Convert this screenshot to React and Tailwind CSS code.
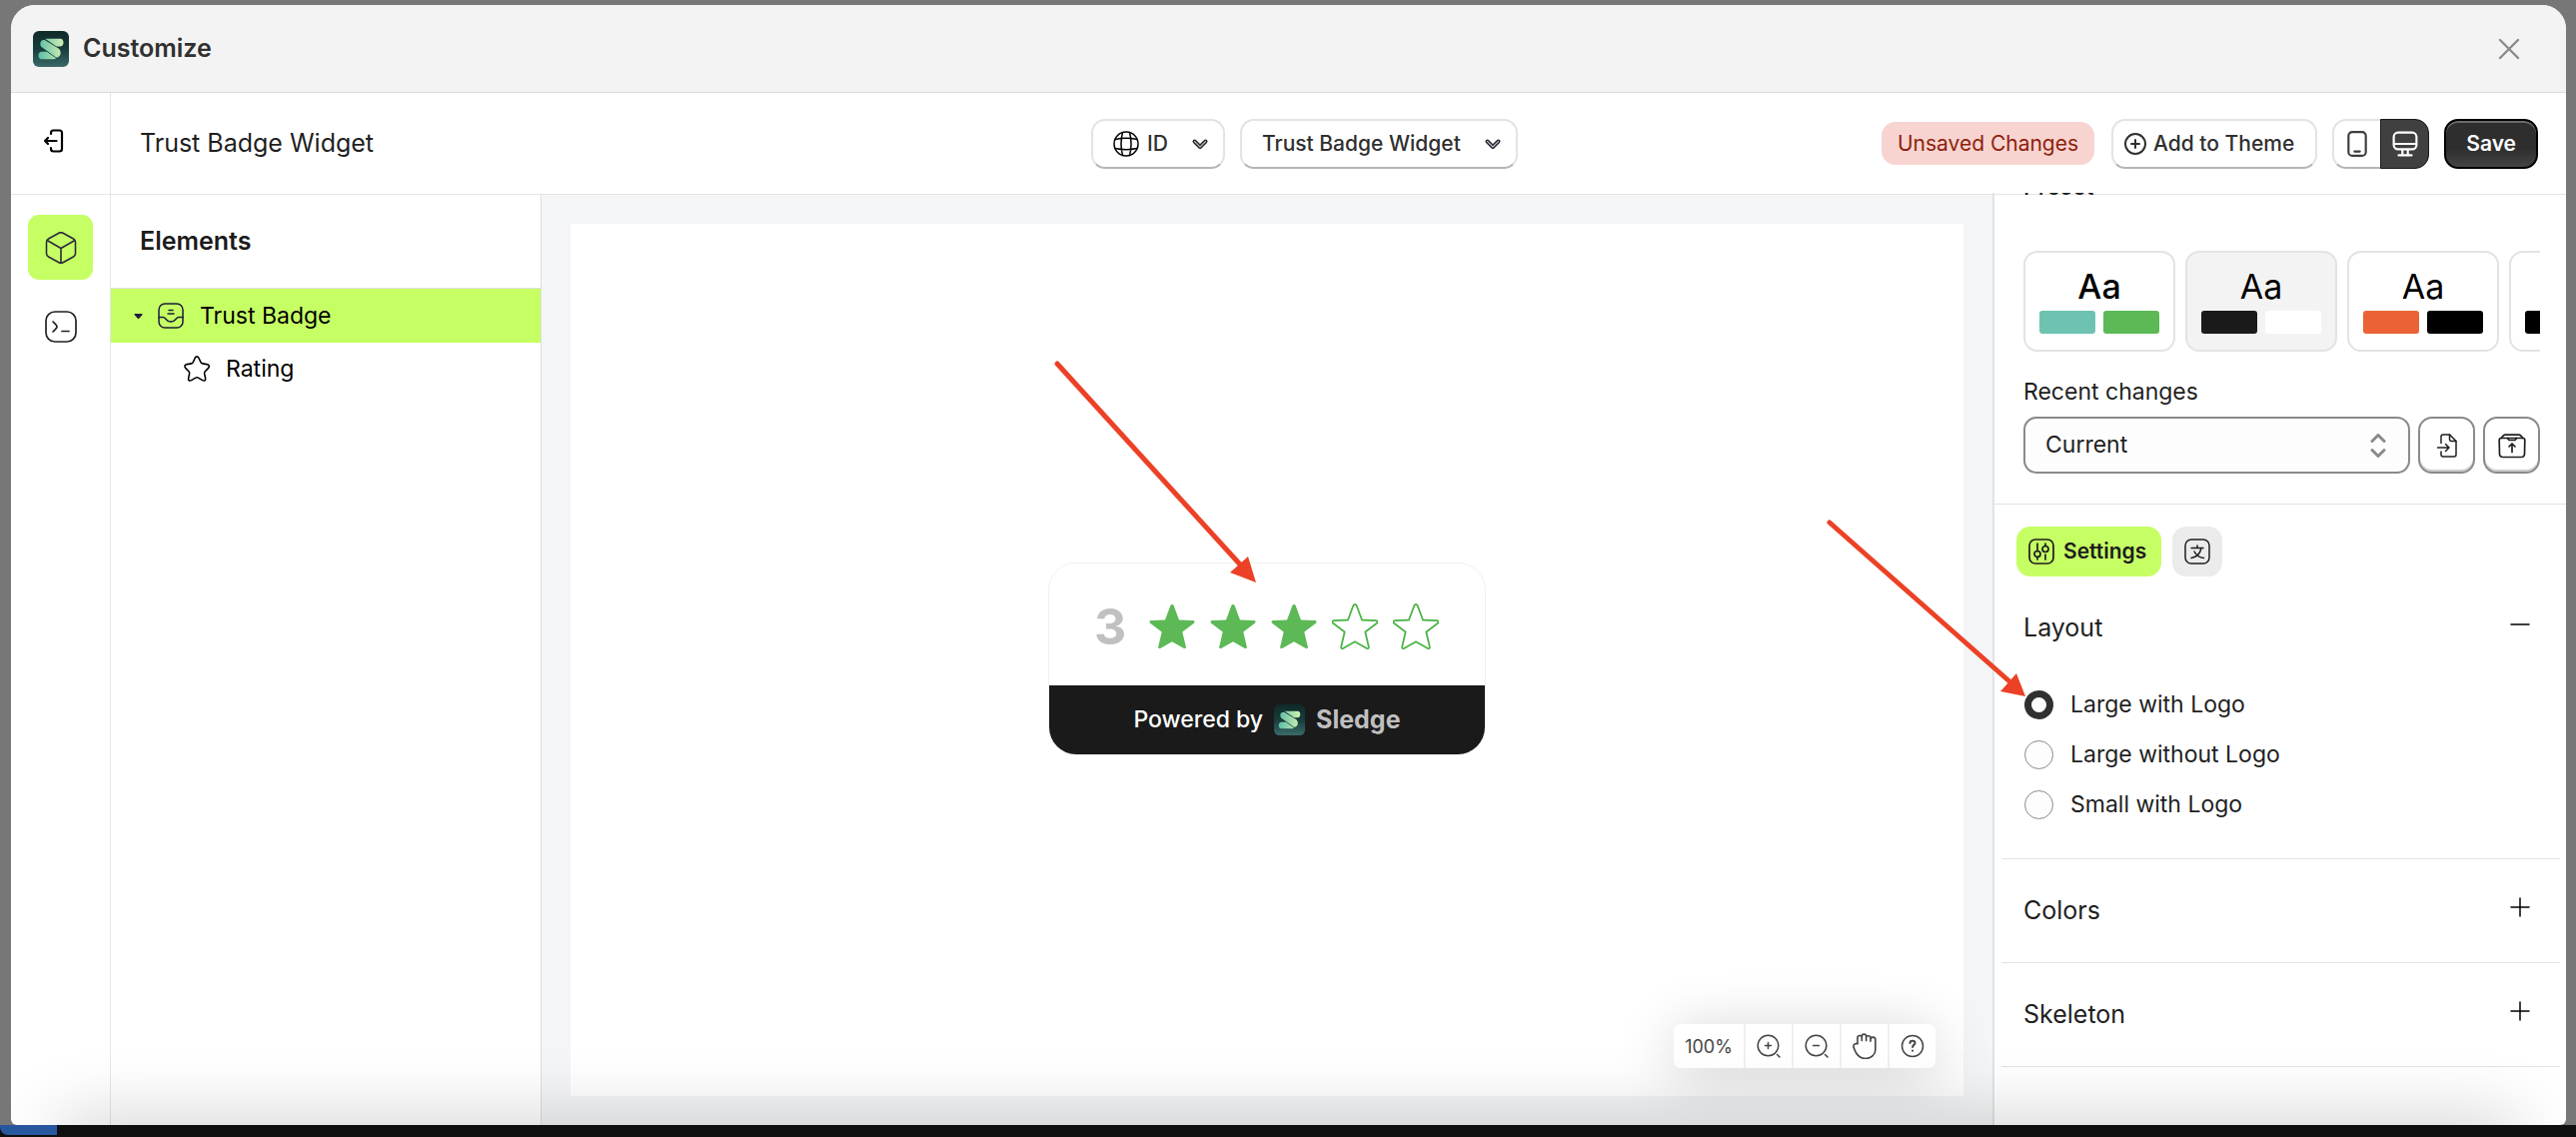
import { useId, useState } from "react";
import clsx from "clsx";

const PRESETS = [
  { id: "fresh", weight: "font-medium", swatches: ["bg-[#6dc3b0]", "bg-[#5cb956]"] },
  { id: "mono", weight: "font-normal", swatches: ["bg-[#1a1a1a]", "bg-white"] },
  { id: "ember", weight: "font-normal", swatches: ["bg-[#eb6236]", "bg-black"] },
  { id: "night", weight: "font-normal", swatches: ["bg-black", "bg-[#d9d9d9]"] },
];

const LAYOUTS = ["Large with Logo", "Large without Logo", "Small with Logo"];

function Icon({ className, size = 24, stroke = 1.5, children }) {
  return (
    <svg
      viewBox={`0 0 ${size} ${size}`}
      fill="none"
      stroke="currentColor"
      strokeWidth={stroke}
      strokeLinecap="round"
      strokeLinejoin="round"
      aria-hidden="true"
      className={clsx("shrink-0", className)}
    >
      {children}
    </svg>
  );
}

function Logo({ className }) {
  const id = useId();
  return (
    <svg viewBox="0 0 36 36" className={clsx("shrink-0", className)} aria-hidden="true">
      <defs>
        <linearGradient id={`${id}bg`} x1="0" y1="0" x2="0" y2="1">
          <stop offset="0" stopColor="#0f2a29" />
          <stop offset="0.5" stopColor="#173c3b" />
          <stop offset="1" stopColor="#3a6a68" />
        </linearGradient>
        <linearGradient id={`${id}s`} x1="6" y1="0" x2="31" y2="0" gradientUnits="userSpaceOnUse">
          <stop offset="0" stopColor="#5fbfa8" />
          <stop offset="1" stopColor="#d3f0b0" />
        </linearGradient>
      </defs>
      <rect width="36" height="36" rx="6" fill={`url(#${id}bg)`} />
      <g fill={`url(#${id}s)`}>
        <path d="M12 7.800h15.500c4 0 4 7.700 0 7.700h-4z" />
        <path d="M8.200 15.800C5.800 12 8.500 8 12 9.200L25.500 17.500c4 3.200 2 9.300-2.300 9z" />
        <path d="M8.500 20.700h5.300L23 27.300c-.6.700-1 .9-2 .9H8.500c-4 0-4-7.500 0-7.500z" />
      </g>
    </svg>
  );
}

function ChevronDown() {
  return (
    <Icon size={18} stroke={4} className="pointer-events-none size-[18px] text-[#26262b]">
      <path d="M3.500 6.500L9 12l5.500-5.500" />
      <path d="M3.500 6.500L9 12l5.500-5.500" stroke="#b4b4c4" strokeWidth="1.200" />
    </Icon>
  );
}

function BarSelect({ label, icon, options, className }) {
  return (
    <div
      className={clsx(
        "flex h-[50px] items-center rounded-[14px] border-2 border-[#e3e3e3] border-b-[#b5b5b5] bg-white",
        className,
      )}
    >
      {icon}
      <select
        aria-label={label}
        className="min-w-0 flex-1 appearance-none bg-transparent text-[21px] font-medium text-[#303030] outline-none"
      >
        {options.map((o) => (
          <option key={o}>{o}</option>
        ))}
      </select>
      <ChevronDown />
    </div>
  );
}

function TitleBar() {
  return (
    <header className="flex h-[88px] shrink-0 items-center gap-[14px] border-b border-[#dcdcdc] bg-[#f3f3f3] pr-[45px] pl-[22px]">
      <Logo className="size-9" />
      <h1 className="flex-1 text-[25px] font-semibold text-[#303030]">Customize</h1>
      <button type="button" aria-label="Close" className="text-[#8a8a8a]">
        <Icon stroke={2.4} className="size-6">
          <path d="M3 3l18 18M21 3L3 21" />
        </Icon>
      </button>
    </header>
  );
}

function TopBar() {
  return (
    <div className="flex h-[102px] shrink-0 items-center border-b border-[#e5e5e5] bg-white text-[#303030]">
      <div className="flex h-full w-[100px] shrink-0 items-center border-r border-[#e5e5e5] pb-1.5 pl-8">
        <button type="button" aria-label="Exit" className="text-black">
          <Icon stroke={2.2} className="size-6">
            <path d="M8 5V4a2.500 2.500 0 0 1 2.500-2.500h6A2.500 2.500 0 0 1 19 4v16a2.500 2.500 0 0 1-2.500 2.500h-6A2.500 2.500 0 0 1 8 20v-1" />
            <path d="M13.500 12H2M5 9l-3 3 3 3" />
          </Icon>
        </button>
      </div>
      <h2 className="flex-1 pl-[29px] text-[25px] text-[#1f1f1f]">Trust Badge Widget</h2>
      <div className="mr-[69px] flex gap-[15px]">
        <BarSelect
          label="Language"
          options={["ID"]}
          className="w-[134px] gap-2 pr-[14px] pl-[20px]"
          icon={
            <Icon size={26} className="size-[26px] text-black">
              <circle cx="13" cy="13" r="12" />
              <path d="M9.500 1.500C7.500 9 7.500 17 9.500 24.500M16.500 1.500c2 7.500 2 15.500 0 23M2 8.500c7-1.500 15-1.500 22 0M2 17.500c7 1.500 15 1.500 22 0" />
            </Icon>
          }
        />
        <BarSelect
          label="Widget"
          options={["Trust Badge Widget"]}
          className="w-[278px] pr-[14px] pl-[20px]"
        />
      </div>
      <div className="flex flex-1 items-center justify-end gap-[15px] pr-7">
        <span className="mr-[2px] flex h-[43px] items-center rounded-[14px] bg-[#f8d4d1] px-4 text-[21px] whitespace-nowrap text-[#8e1f0b]">
          Unsaved Changes
        </span>
        <button
          type="button"
          className="flex h-[50px] items-center gap-[6px] rounded-[14px] border-2 border-[#e3e3e3] border-b-[#b5b5b5] pr-[21px] pl-[10px] text-[21px] font-medium whitespace-nowrap"
        >
          <Icon stroke={2} className="size-6">
            <circle cx="12" cy="12" r="10" />
            <path d="M12 8v8M8 12h8" />
          </Icon>
          Add to Theme
        </button>
        <div className="flex h-[50px]">
          <button
            type="button"
            aria-label="Mobile preview"
            className="flex w-12 items-center justify-center rounded-l-[14px] border-2 border-r-0 border-[#e3e3e3] border-b-[#b5b5b5]"
          >
            <Icon stroke={2} className="size-[26px] text-[#3d3d3d]">
              <rect x="4" y="1" width="16" height="22" rx="3.500" />
              <path d="M9.500 19h5" />
            </Icon>
          </button>
          <button
            type="button"
            aria-label="Desktop preview"
            className="flex w-[49px] items-center justify-center rounded-r-[14px] border border-[#1a1a1a] bg-[#404040] text-white"
          >
            <Icon stroke={2} className="size-[26px]">
              <rect x="1.500" y="1.500" width="21" height="15.500" rx="4" />
              <path d="M2 12h20M9.500 17.500v4M14.500 17.500v4M6 22.500h12" />
            </Icon>
          </button>
        </div>
        <button
          type="button"
          className="h-[50px] rounded-[14px] border-2 border-black bg-linear-to-b from-[#2e2e2e] from-60% to-[#444444] px-[20px] text-[21px] font-semibold text-white shadow-[inset_0_2px_0_#6a6a6a]"
        >
          Save
        </button>
      </div>
    </div>
  );
}

function Rail() {
  return (
    <nav className="flex w-[100px] shrink-0 flex-col items-center gap-[14px] border-r border-[#e5e5e5] pt-5">
      <button
        type="button"
        aria-label="Elements"
        className="flex size-[65px] items-center justify-center rounded-[11px] bg-[#c6ff64] text-[#2b2b3a]"
      >
        <Icon size={32} stroke={1.600} className="size-8">
          <path d="M14 1.200a4 4 0 0 1 4 0l10.500 5.800a4 4 0 0 1 2 3.500v11a4 4 0 0 1-2 3.500L18 30.800a4 4 0 0 1-4 0L3.500 25a4 4 0 0 1-2-3.500v-11a4 4 0 0 1 2-3.500z" />
          <path d="M2.500 8.800L16 16.500l13.500-7.700M16 16.500V31" />
        </Icon>
      </button>
      <button
        type="button"
        aria-label="Custom code"
        className="flex size-[65px] items-center justify-center text-[#222222]"
      >
        <Icon size={32} stroke={1.700} className="size-8">
          <rect x="1" y="1" width="30" height="30" rx="9" />
          <path d="M8 11c1.500 1.500 4 3.500 4 5s-2.500 3.500-4 5M17 20.500h7" />
        </Icon>
      </button>
    </nav>
  );
}

function ElementsTree() {
  return (
    <aside className="w-[431px] shrink-0 border-r border-[#dcdfe3] bg-white text-black">
      <h3 className="flex h-[94px] items-center border-b border-[#e0e0e0] pl-[29px] text-[25px] font-semibold text-[#1c1c1c]">
        Elements
      </h3>
      <ul className="text-[23px]">
        <li>
          <button
            type="button"
            className="flex h-[54px] w-full items-center bg-[#c6ff64] pl-[23px]"
          >
            <svg viewBox="0 0 10 6" className="h-[5px] w-[9px]" aria-hidden="true">
              <path d="M1 0h8c1 0 1.200.8.600 1.400L5.800 5.600c-.5.500-1.100.5-1.600 0L.4 1.400C-.2.800 0 0 1 0z" fill="#1d1d3a" />
            </svg>
            <Icon size={26} className="ml-[15px] size-[26px] text-[#1d1d3a]">
              <rect x="1" y="1" width="24" height="24" rx="6" />
              <path d="M1 14.500h4.500c2.500 0 2.500 4.500 7.500 4.500s5-4.500 7.500-4.500H25M11 7.500h4M10 11h6" />
            </Icon>
            <span className="ml-4">Trust Badge</span>
          </button>
        </li>
        <li>
          <button type="button" className="flex h-[52px] w-full items-center pl-[73px]">
            <Icon size={26} stroke={1.600} className="size-[26px]">
              <path d="M11.300 2c.8-1.500 2.600-1.500 3.400 0l2.300 4.700c.3.600 1 1.100 1.700 1.200l4.300.7c2.500.4 3 2.200 1.300 4l-3 3.100c-.6.600-.8 1.400-.7 2.200l.9 4.200c.6 2.700-.9 3.700-3.200 2.300l-3.900-2.300c-.7-.4-1.900-.4-2.600 0l-3.900 2.300c-2.300 1.400-3.800.3-3.200-2.300l.9-4.200c.1-.8-.1-1.600-.7-2.200l-3-3.100c-1.700-1.800-1.200-3.600 1.300-4l4.300-.7c.7-.1 1.400-.6 1.700-1.200z" />
            </Icon>
            <span className="ml-4">Rating</span>
          </button>
        </li>
      </ul>
    </aside>
  );
}

function RatingStar({ filled }) {
  return (
    <svg viewBox="0 0 46 46" className="size-[46px]" aria-hidden="true">
      <path
        d="M21.300 2.200c.6-1.600 2.800-1.600 3.400 0l5.300 14.300 14 .6c1.600.1 2 1.800.9 2.700L33.300 28.500l3.500 14.700c.3 1.600-1 2.400-2.300 1.600L23 38.300 11.500 44.800c-1.300.8-2.600 0-2.300-1.600l3.500-14.700L1.100 19.800c-1.100-.9-.7-2.600.9-2.700l14-.6z"
        fill={filled ? "#5cb956" : "none"}
        stroke="#4cb446"
        strokeWidth={filled ? 0 : 1.8}
        strokeLinejoin="round"
      />
    </svg>
  );
}

function TrustBadge({ rating }) {
  return (
    <div className="mb-[2px] w-[438px] overflow-hidden rounded-[28px] border border-[#f0f0f0]">
      <div className="flex h-[122px] items-center bg-white pt-[4px] pl-[45px]">
        <span className="text-[50px] font-bold text-[#c0c0c0]">{rating}</span>
        <div className="ml-[23px] flex gap-[15px]" role="img" aria-label={`${rating} out of 5`}>
          {[1, 2, 3, 4, 5].map((n) => (
            <RatingStar key={n} filled={n <= rating} />
          ))}
        </div>
      </div>
      <div className="flex h-[69px] items-center justify-center bg-[#1a1a1a]">
        <span className="text-[23px] font-medium text-white">Powered by</span>
        <Logo className="mx-[11px] size-[31px]" />
        <span className="text-[25px] font-bold text-[#bfbfbf]">Sledge</span>
      </div>
    </div>
  );
}

function ZoomToolbar() {
  const cell = "flex w-12 items-center justify-center border-l-2 border-[#f0f0f0]";
  return (
    <div className="absolute right-7 bottom-7 flex h-[44px] rounded-[7px] bg-white text-[#444444] shadow-[0_8px_60px_rgba(0,0,0,0.2)]">
      <span className="flex w-[70px] items-center justify-center text-[18px]">100%</span>
      <button type="button" aria-label="Zoom in" className={cell}>
        <Icon className="size-6">
          <circle cx="11.500" cy="11.500" r="10.300" />
          <path d="M11.500 8.500v6M8.500 11.500h6M20.500 20.500l2.500 2.500" />
        </Icon>
      </button>
      <button type="button" aria-label="Zoom out" className={cell}>
        <Icon className="size-6">
          <circle cx="11.500" cy="11.500" r="10.300" />
          <path d="M8.500 11.500h6M20.500 20.500l2.500 2.500" />
        </Icon>
      </button>
      <button type="button" aria-label="Pan" className={cell}>
        <Icon className="size-[26px]">
          <path d="M5.500 10V4.500a2 2 0 0 1 4-.5V3a2 2 0 0 1 4 0v1.500a2 2 0 0 1 4 0V6a2 2 0 0 1 4.500 0v9.500C22 20 18 23.500 13 23.500c-4 0-7-2-9-5.500l-2-4.500c-.8-3 1.500-4.500 3.500-3.500M9.500 4v3M13.500 4v3M17.500 5v2.500" />
        </Icon>
      </button>
      <button type="button" aria-label="Help" className={cell}>
        <Icon className="size-6">
          <circle cx="12" cy="12" r="10.500" />
          <path d="M9.500 9c0-3 5-3 5 0 0 1.800-2.500 2-2.500 4M12 16.500v.3" strokeWidth="2" />
        </Icon>
      </button>
    </div>
  );
}

function PresetSection() {
  const [preset, setPreset] = useState("mono");
  const iconButton =
    "flex h-[57px] w-[57px] shrink-0 items-center justify-center rounded-[14px] border-2 border-[#8a8a8a] text-[#1f1f1f] shadow-[inset_0_-2px_0_#cccccc]";
  return (
    <section className="border-b border-[#e3e3e3] pr-[26px] pb-[30px] pl-[29px]">
      <h3 className="-mt-[22px] mb-12 text-[23px] leading-8 font-medium">Preset</h3>
      <div className="flex gap-[10px] overflow-hidden">
        {PRESETS.map((p) => (
          <button
            key={p.id}
            type="button"
            aria-label={`Preset ${p.id}`}
            onClick={() => setPreset(p.id)}
            className={clsx(
              "flex h-[101px] w-[152px] shrink-0 flex-col rounded-[14px] border-2 border-[#e3e3e3] px-[14px] pt-3 text-black",
              preset === p.id ? "bg-[#f3f3f3]" : "bg-white",
            )}
          >
            <span className={clsx("w-full pb-[2px] text-center text-[34px] leading-[44px]", p.weight)}>
              Aa
            </span>
            <span className="flex w-full gap-2">
              {p.swatches.map((s) => (
                <span key={s} className={clsx("h-[23px] flex-1 rounded-[3px]", s)} />
              ))}
            </span>
          </button>
        ))}
      </div>
      <label htmlFor="recent" className="mt-[25px] block text-[23px] leading-[30px]">
        Recent changes
      </label>
      <div className="mt-[10px] flex gap-2">
        <div className="flex h-[57px] flex-1 items-center rounded-[13px] border-2 border-[#8a8a8a] bg-[#fdfdfd] pr-[18px] pl-5">
          <select id="recent" className="flex-1 appearance-none bg-transparent text-[23px] outline-none">
            <option>Current</option>
          </select>
          <Icon stroke={3} className="pointer-events-none size-6 text-[#8a8a8a]">
            <path d="M6 7.500L12 1.500l6 6M6 16.500l6 6 6-6" />
          </Icon>
        </div>
        <button type="button" aria-label="Import" className={iconButton}>
          <Icon className="size-6">
            <path d="M6 9.500V3a2 2 0 0 1 2-2h6.500L21 7.500V21a2 2 0 0 1-2 2H8a2 2 0 0 1-2-2v-3" />
            <path d="M14.500 1v4.500a2 2 0 0 0 2 2H21M2.500 14H14M10.500 10.500L14 14l-3.500 3.500" />
          </Icon>
        </button>
        <button type="button" aria-label="Export" className={iconButton}>
          <Icon size={28} stroke={1.700} className="size-7">
            <path d="M3 6.500h22a2 2 0 0 1 1.800 2l-.3 14a3 3 0 0 1-3 3h-19a3 3 0 0 1-3-3l-.3-14A2 2 0 0 1 3 6.500z" />
            <path d="M3 6.500l2.500-2.700a2 2 0 0 1 1.500-.6h14a2 2 0 0 1 1.500.6L25 6.500M9.500 6.500l1.500 2h6l1.500-2M14 20.500v-8M11 15l3-3 3 3" />
          </Icon>
        </button>
      </div>
    </section>
  );
}

function SectionHeader({ title, open }) {
  return (
    <button
      type="button"
      aria-expanded={!!open}
      className="flex h-[103px] w-full items-center justify-between pr-[30px] pl-[22px]"
    >
      <span className="text-[25px] font-normal">{title}</span>
      <Icon size={20} className="mb-2 size-5 text-black">
        <path d={open ? "M1 10h18" : "M1 10h18M10 1v18"} />
      </Icon>
    </button>
  );
}

function SettingsPanel() {
  const [layout, setLayout] = useState(LAYOUTS[0]);
  return (
    <aside className="-mt-[2px] w-[574px] shrink-0 overflow-hidden border-l-2 border-[#e0e3e6] text-[#1f1f1f]">
      <PresetSection />
      <div className="flex gap-[11px] pt-[22px] pl-[22px]">
        <button
          type="button"
          className="flex h-[50px] items-center gap-[9px] rounded-[14px] bg-[#c6ff64] pr-[15px] pl-3 text-[21px] font-semibold text-[#1c1c1c]"
        >
          <Icon size={26} stroke={1.700} className="size-[26px]">
            <rect x="1" y="1" width="24" height="24" rx="6" />
            <circle cx="9" cy="15.500" r="3" />
            <circle cx="17" cy="10.500" r="3" />
            <path d="M9 5v7.500M9 18.500V21M17 5v2.500M17 16v5" />
          </Icon>
          Settings
        </button>
        <button
          type="button"
          aria-label="Translations"
          className="flex size-[50px] items-center justify-center rounded-[14px] bg-[#ebebeb] text-[#1f1f1f]"
        >
          <Icon size={26} className="size-[26px]">
            <rect x="1" y="1" width="24" height="24" rx="6" />
            <path d="M7 9.500h12M13 7v2.500M17 9.500c-1 5-4.500 9-10 10M10 13c2 4 5.500 6 9.500 6.500" />
          </Icon>
        </button>
      </div>
      <div className="mr-[6px] ml-[7px]">
        <section className="border-b border-[#e3e3e3] pb-[29px]">
          <SectionHeader title="Layout" open />
          <div role="radiogroup" aria-label="Layout" className="pl-[23px]">
            {LAYOUTS.map((name) => (
              <label key={name} className="flex h-[50px] items-center gap-[17px] text-[23px]">
                <input
                  type="radio"
                  name="layout"
                  checked={layout === name}
                  onChange={() => setLayout(name)}
                  className="size-[29px] appearance-none rounded-full border border-[#8a8a8a] bg-[#fdfdfd] checked:border-[7px] checked:border-[#303030]"
                />
                {name}
              </label>
            ))}
          </div>
        </section>
        <section className="border-b border-[#e3e3e3]">
          <SectionHeader title="Colors" />
        </section>
        <section className="border-b border-[#e3e3e3]">
          <SectionHeader title="Skeleton" />
        </section>
      </div>
    </aside>
  );
}

// Callout arrows drawn over the page, pointing at the badge and the first radio
function Callouts() {
  return (
    <svg
      viewBox="0 0 2578 1138"
      className="pointer-events-none absolute inset-0 h-full w-full"
      aria-hidden="true"
    >
      <g fill="#ec4126" stroke="#ec4126">
        <path d="M1058 364L1242 566M1831 523L2011 682" strokeWidth="5" strokeLinecap="round" />
        <path d="M1257 583L1249 557 1231 573zM2027 697L2018 674 2002 692z" strokeWidth="0" />
      </g>
    </svg>
  );
}

export default function App() {
  return (
    <div className="relative flex h-screen flex-col overflow-hidden bg-[#777777] pt-[5px] font-[Inter,sans-serif]">
      <div className="relative mr-[10px] ml-[11px] flex min-h-0 flex-1 flex-col overflow-hidden rounded-t-[24px] rounded-b-[6px] bg-white">
        <TitleBar />
        <TopBar />
        <div className="flex min-h-0 flex-1">
          <Rail />
          <ElementsTree />
          <main className="flex min-w-0 flex-1 bg-[#f3f5f7] p-[29px]">
            <div className="relative flex flex-1 items-center justify-center bg-white">
              <TrustBadge rating={3} />
              <ZoomToolbar />
            </div>
          </main>
          <SettingsPanel />
        </div>
        <div className="pointer-events-none absolute right-12 -bottom-10 left-12 h-10 shadow-[0_0_70px_rgba(0,0,0,0.25)]" />
      </div>
      <div className="flex h-[12px] shrink-0 bg-[#0f0f0f]">
        <div className="h-[10px] w-[57px] rounded-bl-[8px] bg-[#27579f]" />
      </div>
      <Callouts />
    </div>
  );
}
